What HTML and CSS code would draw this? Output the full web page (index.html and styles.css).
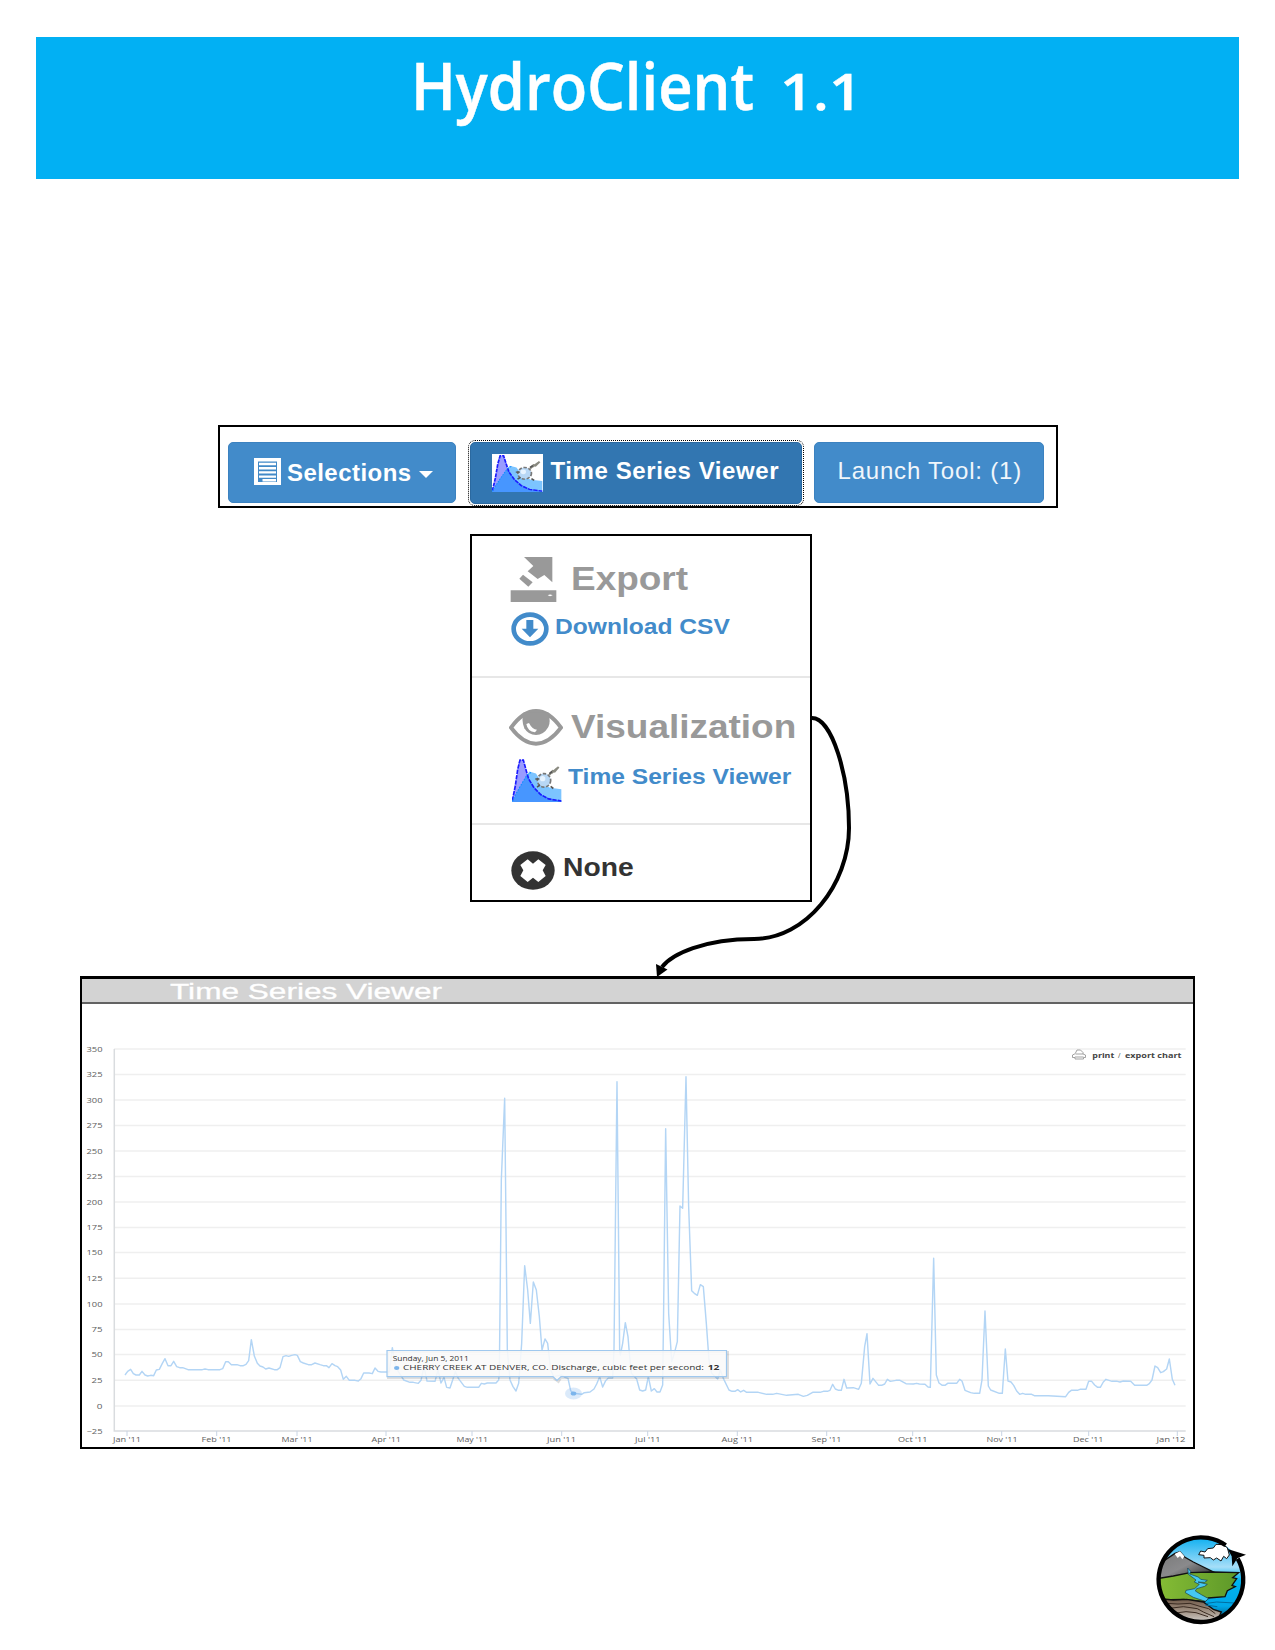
FILE: index.html
```html
<!DOCTYPE html>
<html lang="en">
<head>
<meta charset="utf-8">
<title>HydroClient 1.1</title>
<link rel="stylesheet" href="styles.css">
</head>
<body>
<svg class="defs" width="0" height="0" aria-hidden="true">
  <symbol id="hydrograph" viewBox="0 0 150 130" preserveAspectRatio="none">
    <path d="M0 128L12 72L20 14Q28 -4 37 14L48 60L62 90V130H0Z" fill="#9a9cff"/>
    <path d="M32 72L52 40L72 46L90 74L114 88L148 92V130H32Z" fill="#7cc4ff"/>
    <path d="M0 130L22 88L45 50L62 80L88 108L112 120L148 127V130Z" fill="#4796ff"/>
    <path d="M1 126L10 82L17 34L24 6L34 6L44 42L50 62L66 88L86 108L110 121L148 127" fill="none" stroke="#1b1bff" stroke-width="5" stroke-dasharray="13 3"/>
    <path d="M0 128L22 88L45 50L58 42" fill="none" stroke="#0b8cff" stroke-width="3" stroke-dasharray="5 4"/>
    <path d="M112 50L122 38L128 40L140 26M118 45L136 30" fill="none" stroke="#8a8a80" stroke-width="6"/>
    <circle cx="96" cy="66" r="20" fill="#b7d7f5" stroke="#777" stroke-width="5" stroke-dasharray="10 5"/>
    <path d="M70 62H82M75 86L84 80M116 84L124 90M112 46L120 40" stroke="#555" stroke-width="5"/>
    <circle cx="92" cy="61" r="8" fill="#e6f3ff"/>
  </symbol>
</svg>

<header class="banner">
  <svg class="banner-title" width="360" height="120" viewBox="395 37 360 120">
    <text x="411" y="110" font-size="66" textLength="343" lengthAdjust="spacingAndGlyphs">HydroClient</text>
  </svg>
  <svg class="banner-version" width="100" height="120" viewBox="775 37 100 120">
    <text x="780" y="110" font-size="51" textLength="82" lengthAdjust="spacingAndGlyphs">1.1</text>
  </svg>
</header>

<nav class="toolbar">
  <div class="btn btn-selections">
    <svg width="27" height="27" viewBox="0 0 27 27"><path d="M0 0H27V27H0Z" fill="#fff"/><path d="M4 3.5H23V24H4Z" fill="#4189c7"/><path d="M5 6H22M5 10.2H22M5 14.4H22M5 18.6H22M8.500 22.200H22" stroke="#fff" stroke-width="2.400"/></svg>
    <span class="bold">Selections</span>
    <i class="caret"></i>
  </div>
  <div class="btn btn-viewer">
    <svg class="tile" width="51" height="38"><use href="#hydrograph" width="51" height="38"/></svg>
    <span class="bold">Time Series Viewer</span>
  </div>
  <div class="btn btn-launch"><span>Launch Tool: (1)</span></div>
</nav>

<section class="menu">
  <div class="group group-export">
    <div class="row heading">
      <svg class="i-export" width="47" height="45" viewBox="0 0 141 135"><path d="M42 0H127V76L103 54L83 66L53 43L70 27ZM39 53L68 76L55 89L28 65ZM2 100H139V135H2Z" fill="#999"/><path d="M113 115Q120 110 128 115Q120 120 113 115Z" fill="#fff"/></svg>
      <span class="label">Export</span>
    </div>
    <div class="row link">
      <svg class="i-download" width="38" height="34" viewBox="0 0 114 102"><ellipse cx="57" cy="51" rx="49" ry="43" fill="none" stroke="#428bca" stroke-width="14"/><path d="M46 24H67V50H82L57 76L32 50H46Z" fill="#428bca"/></svg>
      <span class="label">Download CSV</span>
    </div>
  </div>
  <div class="group group-visual">
    <div class="row heading">
      <svg class="i-eye" width="54" height="37" viewBox="0 0 162 111"><path d="M6 56Q42 6 81 6Q120 6 156 56Q120 104 81 104Q42 104 6 56Z" fill="#fff" stroke="#999" stroke-width="12"/><path d="M44 10H118Q126 40 118 54Q104 78 81 78Q58 78 46 58Q36 34 44 10Z" fill="#999"/><path d="M52 45Q56 68 78 70L84 62Q70 62 60 42Z" fill="#fff"/></svg>
      <span class="label">Visualization</span>
    </div>
    <div class="row link">
      <svg class="i-graph" width="50" height="44"><use href="#hydrograph" width="50" height="44"/></svg>
      <span class="label">Time Series Viewer</span>
    </div>
  </div>
  <div class="group group-none">
    <div class="row none">
      <svg class="i-none" width="44" height="39" viewBox="0 0 132 117"><ellipse cx="66" cy="58.500" rx="65" ry="58" fill="#333"/><path d="M66 38L82 25L104 42L95 58L104 75L82 93L66 80L50 93L28 75L37 58L28 42L50 25Z" fill="#fff"/></svg>
      <span class="label">None</span>
    </div>
  </div>
</section>

<svg class="connector" width="205" height="265" viewBox="650 715 205 265">
  <path d="M812 718C832 718 849 775 849 828C849 884 806 939 754 939C704 939 672 954 662 967" fill="none" stroke="#000" stroke-width="4"/>
  <path d="M656 964L667.500 969.500L657 977Z"/>
</svg>

<section class="viewer">
  <div class="viewer-head">
    <svg width="300" height="23" viewBox="160 979 300 23"><text x="170" y="999" font-size="22" textLength="272" lengthAdjust="spacingAndGlyphs">Time Series Viewer</text></svg>
  </div>
  <svg class="chart" width="1111" height="443" viewBox="82 1004 1111 443">
    <g class="grid">
      <path d="M114 1049H1185.700M114 1074.500H1185.700M114 1100H1185.700M114 1125.500H1185.700M114 1151H1185.700M114 1176.500H1185.700M114 1202H1185.700M114 1227.500H1185.700M114 1252.500H1185.700M114 1278.300H1185.700M114 1304H1185.700M114 1329.400H1185.700M114 1354.500H1185.700M114 1380.300H1185.700M114 1406H1185.700"/>
    </g>
    <path class="axis" d="M114.300 1049V1431H1185.700"/>
    <path class="ticks" d="M127 1431V1436M216.700 1431V1436M297 1431V1436M386 1431V1436M472 1431V1436M561.700 1431V1436M647.700 1431V1436M737.300 1431V1436M826.700 1431V1436M912.700 1431V1436M1001.700 1431V1436M1088.700 1431V1436M1177.300 1431V1436"/>
    <g class="ylabels">
      <text x="86.500" y="1051.500" textLength="16" lengthAdjust="spacingAndGlyphs">350</text>
      <text x="86.500" y="1077" textLength="16" lengthAdjust="spacingAndGlyphs">325</text>
      <text x="86.500" y="1102.500" textLength="16" lengthAdjust="spacingAndGlyphs">300</text>
      <text x="86.500" y="1128" textLength="16" lengthAdjust="spacingAndGlyphs">275</text>
      <text x="86.500" y="1153.500" textLength="16" lengthAdjust="spacingAndGlyphs">250</text>
      <text x="86.500" y="1179" textLength="16" lengthAdjust="spacingAndGlyphs">225</text>
      <text x="86.500" y="1204.500" textLength="16" lengthAdjust="spacingAndGlyphs">200</text>
      <text x="86.500" y="1230" textLength="16" lengthAdjust="spacingAndGlyphs">175</text>
      <text x="86.500" y="1255.300" textLength="16" lengthAdjust="spacingAndGlyphs">150</text>
      <text x="86.500" y="1281" textLength="16" lengthAdjust="spacingAndGlyphs">125</text>
      <text x="86.500" y="1306.500" textLength="16" lengthAdjust="spacingAndGlyphs">100</text>
      <text x="91.500" y="1332" textLength="11" lengthAdjust="spacingAndGlyphs">75</text>
      <text x="91.500" y="1357.300" textLength="11" lengthAdjust="spacingAndGlyphs">50</text>
      <text x="91.500" y="1383" textLength="11" lengthAdjust="spacingAndGlyphs">25</text>
      <text x="96.800" y="1408.500" textLength="5.700" lengthAdjust="spacingAndGlyphs">0</text>
      <text x="86.500" y="1434" textLength="16" lengthAdjust="spacingAndGlyphs">−25</text>
    </g>
    <g class="xlabels">
      <text x="113" y="1442" textLength="28" lengthAdjust="spacingAndGlyphs">Jan '11</text>
      <text x="201.500" y="1442" textLength="30" lengthAdjust="spacingAndGlyphs">Feb '11</text>
      <text x="281.500" y="1442" textLength="31" lengthAdjust="spacingAndGlyphs">Mar '11</text>
      <text x="371.500" y="1442" textLength="29.500" lengthAdjust="spacingAndGlyphs">Apr '11</text>
      <text x="456.500" y="1442" textLength="31.500" lengthAdjust="spacingAndGlyphs">May '11</text>
      <text x="547" y="1442" textLength="29" lengthAdjust="spacingAndGlyphs">Jun '11</text>
      <text x="635" y="1442" textLength="25.500" lengthAdjust="spacingAndGlyphs">Jul '11</text>
      <text x="721.500" y="1442" textLength="31.500" lengthAdjust="spacingAndGlyphs">Aug '11</text>
      <text x="811.500" y="1442" textLength="30" lengthAdjust="spacingAndGlyphs">Sep '11</text>
      <text x="898" y="1442" textLength="29.500" lengthAdjust="spacingAndGlyphs">Oct '11</text>
      <text x="986.500" y="1442" textLength="31" lengthAdjust="spacingAndGlyphs">Nov '11</text>
      <text x="1073" y="1442" textLength="30.500" lengthAdjust="spacingAndGlyphs">Dec '11</text>
      <text x="1156.500" y="1442" textLength="29" lengthAdjust="spacingAndGlyphs">Jan '12</text>
    </g>
    <g transform="translate(70 1200) scale(.33333)">
      <polyline class="series" points="165,525 173,514 182,508 190,521 198,525 208,525 216,514 225,525 233,528 242,526 251,527 259,510 268,508 277,490 285,476 294,497 303,497 311,484 320,500 329,503 338,503 354,509 397,509 405,507 414,509 450,509 458,506 467,485 475,485 484,494 501,494 510,497 520,497 528,493 536,482 544,419 553,468 562,490 570,498 579,501 587,507 597,504 613,509 622,509 630,503 639,470 648,467 656,469 665,466 675,464 682,466 691,485 700,489 715,494 725,494 735,489 750,494 760,497 769,497 777,503 786,491 795,497 803,500 812,510 820,538 829,529 838,541 855,541 865,543 873,536 881,519 897,519 907,521 915,504 924,514 933,516 958,516 967,443 975,490 985,515 993,527 1001,540 1020,547 1030,547 1045,550 1053,541 1062,500 1071,543 1095,544 1104,510 1113,549 1122,532 1130,562 1140,564 1148,540 1156,515 1165,535 1183,559 1192,562 1226,562 1234,550 1243,552 1252,549 1278,549 1286,540 1288,520 1294,-60 1304,-305 1312,450 1320,540 1329,560 1338,573 1346,550 1355,430 1364,197 1373,270 1381,370 1390,246 1399,270 1408,350 1416,450 1425,417 1433,430 1442,510 1451,530 1475,525 1485,532 1494,535 1502,572 1511,580 1535,583 1543,578 1560,576 1572,567 1580,552 1589,530 1598,561 1607,542 1615,534 1628,534 1632,450 1641,-355 1649,450 1651,465 1658,430 1666,368 1674,410 1679,470 1684,520 1700,537 1709,570 1718,573 1727,570 1735,530 1744,573 1753,566 1761,576 1770,576 1778,555 1781,320 1787,-214 1796,340 1805,485 1813,460 1822,425 1830,18 1838,25 1848,-370 1856,20 1865,272 1873,280 1882,286 1891,254 1900,260 1909,370 1917,480 1925,520 1943,537 1951,510 1960,535 1977,570 1986,574 1995,574 2003,569 2012,576 2021,571 2030,577 2065,577 2090,583 2108,583 2120,580 2150,586 2185,583 2200,589 2212,586 2228,577 2250,577 2260,574 2272,574 2280,571 2288,553 2296,567 2306,571 2314,571 2322,538 2330,564 2350,563 2366,568 2374,550 2384,440 2391,401 2400,552 2409,535 2426,556 2435,556 2444,552 2452,538 2461,544 2478,541 2490,541 2508,551 2530,552 2540,550 2548,552 2565,553 2574,561 2581,562 2591,175 2599,525 2607,549 2617,556 2625,556 2633,550 2660,550 2669,538 2676,543 2685,571 2702,578 2713,580 2729,580 2736,540 2745,333 2755,558 2762,570 2788,580 2797,580 2806,447 2814,543 2823,546 2831,556 2840,573 2849,583 2858,580 2867,583 2885,583 2893,587 2935,587 2987,590 2996,577 3004,571 3022,571 3030,568 3048,568 3056,544 3065,544 3074,555 3083,562 3091,562 3100,546 3108,538 3126,544 3142,544 3150,546 3160,543 3182,544 3194,556 3230,556 3238,551 3246,540 3255,498 3263,503 3272,518 3280,515 3290,507 3298,477 3307,538 3315,556"/>
    </g>
    <ellipse cx="573.500" cy="1393.500" rx="8.500" ry="6" fill="#7cb5ec" fill-opacity=".28"/>
    <ellipse cx="573.500" cy="1393.500" rx="2.800" ry="2" fill="#7cb5ec"/>
    <path d="M388 1352H728V1378H561L558.500 1382L553 1378H388Z" fill="none" stroke="#000" stroke-opacity=".13" stroke-width="2"/>
    <path class="tip" d="M387 1350.500H726.500V1376.700H561L557 1380.500L553 1376.700H387Z"/>
    <g class="tiptext">
      <text x="392.700" y="1361.300" font-size="6.200" textLength="76" lengthAdjust="spacingAndGlyphs">Sunday, Jun 5, 2011</text>
      <ellipse cx="396.700" cy="1368" rx="2.700" ry="2" fill="#7cb5ec"/>
      <text x="403" y="1370.300" font-size="7.800" textLength="301" lengthAdjust="spacingAndGlyphs">CHERRY CREEK AT DENVER, CO. Discharge, cubic feet per second:</text>
      <text x="707.700" y="1370.300" font-size="7.800" font-weight="700" textLength="11.800" lengthAdjust="spacingAndGlyphs">12</text>
    </g>
    <g class="export">
      <path d="M1075.500 1053L1077 1050H1080.500L1083 1052.500V1054M1075.500 1054H1083L1085.500 1055V1057.500H1083.500V1059H1075V1057.500H1072.500V1055L1075.500 1053.500M1075 1057H1083.500" fill="none" stroke="#999" stroke-width=".9"/>
      <text x="1092.300" y="1058.300" textLength="22" lengthAdjust="spacingAndGlyphs">print</text>
      <text x="1118" y="1058.300" textLength="4" class="slash">/</text>
      <text x="1125" y="1058.300" textLength="56.500" lengthAdjust="spacingAndGlyphs">export chart</text>
    </g>
  </svg>
</section>

<svg class="logo" width="120" height="120" viewBox="0 0 360 360">
  <defs>
    <linearGradient id="sky" x1="0" y1="0" x2="0" y2="1"><stop offset="0" stop-color="#0aaef0"/><stop offset=".35" stop-color="#a6def8"/><stop offset=".5" stop-color="#00b4f0"/><stop offset=".8" stop-color="#00a8e8"/><stop offset="1" stop-color="#053b58"/></linearGradient>
    <linearGradient id="rock" x1="0" y1="0" x2="1" y2="1"><stop offset="0" stop-color="#777"/><stop offset=".5" stop-color="#8a8a8c"/><stop offset="1" stop-color="#222"/></linearGradient>
    <linearGradient id="grass" x1="0" y1="0" x2="1" y2="0"><stop offset="0" stop-color="#86bd35"/><stop offset="1" stop-color="#5d9829"/></linearGradient>
    <linearGradient id="soil" x1="0" y1="0" x2="0" y2="1"><stop offset="0" stop-color="#6d5645"/><stop offset=".5" stop-color="#a39486"/><stop offset="1" stop-color="#ddd"/></linearGradient>
    <clipPath id="disc"><circle cx="183" cy="180" r="127"/></clipPath>
  </defs>
  <g clip-path="url(#disc)">
    <path d="M50 50H320V310H50Z" fill="url(#sky)"/>
    <path d="M50 135L78 118L105 100L120 95L135 112L160 126L220 156L150 166L50 180Z" fill="url(#rock)" stroke="#111" stroke-width="4"/>
    <path d="M104 102L120 94L133 109L127 118L120 108L113 114Z" fill="#fff"/>
    <path d="M50 176L100 168L150 158L220 156L296 158L278 173L290 176L276 196L286 200L262 212L255 230L205 234L194 245L130 238L50 240Z" fill="url(#grass)" stroke="#111" stroke-width="4"/>
    <path d="M143 144L152 154L149 162L175 171L182 178L202 181L194 187L174 186L202 193L194 199L170 206L166 213L184 224L206 236L196 244L160 232L136 218L138 211L164 206L178 193L163 186L168 180L160 174L145 163Z" fill="#45c8f2" stroke="#173c4d" stroke-width="2"/>
    <path d="M50 235L100 240L140 238L190 246L220 268L244 276L225 315H50Z" fill="url(#soil)" stroke="#111" stroke-width="4"/>
    <path d="M66 249L114 252L150 250L183 260L206 266L226 281M80 266L130 260L172 266L190 276L222 290M92 281L138 275L168 278L204 290" fill="none" stroke="#3b2c22" stroke-width="3"/>
    <path d="M200 250L230 246L302 250M196 255L232 260" fill="none" stroke="#006da0" stroke-width="3"/>
  </g>
  <path d="M182 93L195 96L203 86L220 84L228 73L248 74L262 83L268 105L260 116L251 109L243 123L230 114L220 120L211 113L192 114L192 106L176 104Z" fill="#fff" stroke="#111" stroke-width="3"/>
  <path d="M257 76A127 127 0 1 0 293 116" fill="none" stroke="#000" stroke-width="13"/>
  <path d="M263 87L318 104L292 115L277 139L275 109Z"/>
</svg>
</body>
</html>
```
FILE: styles.css
```css
body {
  margin: 0;
  height: 1650px;
  position: relative;
  overflow: hidden;
  background: #fff;
  font-family: "Liberation Sans", Arial, sans-serif;
}
svg { display: block; flex: none; }
.defs { position: absolute; }

.banner {
  box-sizing: border-box;
  margin: 37px 36px 0 36px;
  height: 142px;
  padding-left: 359px;
  background: #02b0f3;
  display: flex;
  align-items: flex-start;
  gap: 20px;
}
.banner svg {
  overflow: visible;
  fill: #fff;
  stroke: #fff;
  stroke-width: .5px;
  font-family: "Open Sans", "Noto Sans", sans-serif;
  font-weight: 600;
}

.toolbar {
  box-sizing: border-box;
  width: 840px;
  height: 83px;
  margin: 246px 0 0 218px;
  border: 2px solid #000;
  padding: 15px 0 0 8px;
  display: flex;
  align-items: flex-start;
}
.btn {
  box-sizing: border-box;
  height: 61px;
  border: 1px solid #3c82c0;
  border-radius: 5px;
  background: #428bca;
  color: #fff;
  font-size: 24px;
  line-height: 28px;
  letter-spacing: .45px;
  white-space: nowrap;
  display: flex;
  align-items: flex-start;
}
.bold { font-weight: 700; }
.btn-selections { width: 228px; padding: 15px 0 0 25px; }
.btn-selections .bold { margin: 1px 0 0 6px; }
.caret {
  border: 7px solid transparent;
  border-top-color: #fff;
  border-bottom: 0;
  margin: 13px 0 0 7px;
}
.btn-viewer {
  width: 332px;
  height: 62px;
  margin-left: 14px;
  padding: 11px 0 0 21px;
  background: #3276b1;
  border-color: #2b69a0;
  outline: 1px dotted #000;
  outline-offset: 1px;
}
.btn-viewer .bold { margin: 3px 0 0 7.5px; letter-spacing: .6px; }
.tile { background: #fff; }
.btn-launch {
  width: 230px;
  margin-left: 12px;
  padding: 14px 0 0 22.5px;
  color: #f0f6fb;
  letter-spacing: .8px;
}

.menu {
  box-sizing: border-box;
  width: 342px;
  height: 368px;
  margin: 26px 0 0 470px;
  border: 2px solid #000;
  font-weight: 700;
}
.group { box-sizing: border-box; border-bottom: 2px solid #e7e7e7; }
.group-export { height: 142px; padding-top: 20px; }
.group-visual { height: 147px; padding-top: 25px; }
.group-none { height: 75px; padding-top: 10px; border: 0; }
.row { display: flex; align-items: center; white-space: nowrap; }
.label { transform-origin: 0 50%; }
.heading { color: #999; font-size: 33px; }
.heading .label { transform: scaleX(1.12); }
.link { color: #428bca; font-size: 22.5px; }
.link .label { transform: scaleX(1.093); }
.none { color: #333; font-size: 25px; height: 65px; }
.none .label { transform: scaleX(1.13); }
.group-export .heading { height: 45px; }
.group-export .link { height: 51px; }
.group-visual .heading { height: 48px; }
.group-visual .link { height: 52px; }
.i-export { margin: 2px 13.5px 0 38px; }
.i-download { margin: 5px 6px 0 39px; }
.i-eye { margin: 1px 8px 0 37px; }
.i-graph { margin: 6px 6px 0 40px; }
.i-none { margin: 6px 7.5px 0 39px; }

.connector { position: absolute; left: 650px; top: 715px; }

.viewer {
  box-sizing: border-box;
  width: 1115px;
  height: 473px;
  margin: 74px 0 0 80px;
  border: 2px solid #000;
  border-top-width: 3px;
}
.viewer-head {
  height: 23px;
  padding-left: 78px;
  background: #d3d3d3;
  border-bottom: 2px solid #626262;
}
.viewer-head svg { overflow: visible; }
.viewer-head text { fill: #fff; stroke: #fff; stroke-width: .3px; }
.chart { font-family: "Open Sans", "Noto Sans", sans-serif; }
.chart text { fill: #555; }
.grid { fill: none; stroke: #efefef; stroke-width: 1.5; }
.axis { fill: none; stroke: #d9dcdf; stroke-width: 1.5; }
.ticks { fill: none; stroke: #c8d4e4; stroke-width: 1; }
.ylabels, .xlabels { font-size: 7.2px; }
.chart .ylabels text, .chart .xlabels text { fill: #606060; }
.series { fill: none; stroke: #b3d5f5; stroke-width: 4.3; stroke-linejoin: round; }
.tip { fill: #f9f9f9; fill-opacity: .88; stroke: #9fc8ee; stroke-width: 1.2; }
.chart .tiptext text { fill: #333; }
.export { font-size: 6.8px; font-weight: 700; }
.chart .export text { fill: #444; }
.chart .export .slash { font-weight: 400; }

.logo { margin: 71px 0 0 1140px; }
```
